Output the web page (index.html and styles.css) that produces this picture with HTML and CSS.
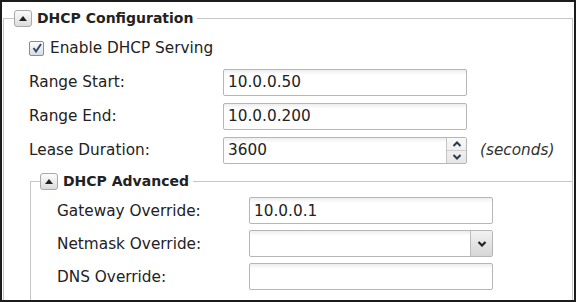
FILE: index.html
```html
<!DOCTYPE html>
<html lang="en">
<head>
  <meta charset="UTF-8" />
  <title>DHCP Configuration</title>
  <link rel="stylesheet" href="styles.css">
</head>
<body>

  <div class="frame">
    <fieldset class="group">
      <legend>
        <span class="legend-inner">
          <span class="toggle"><svg width="8" height="5" viewBox="0 0 8 5"><path d="M0 5 L4 0 L8 5 Z" fill="#222"/></svg></span>
          DHCP Configuration
        </span>
      </legend>

      <div class="rows">
        <label class="row check-row">
          <span class="checkbox">
            <svg width="12" height="12" viewBox="0 0 12 12"><path d="M2.5 6 L5 9.5 L10 2" fill="none" stroke="#3a4a6a" stroke-width="2"/></svg>
          </span>
          Enable DHCP Serving
        </label>
        <div class="row">
          <span class="label">Range Start:</span>
          <input class="text" type="text" value="10.0.0.50">
        </div>
        <div class="row">
          <span class="label">Range End:</span>
          <input class="text" type="text" value="10.0.0.200">
        </div>
        <div class="row">
          <span class="label">Lease Duration:</span>
          <div class="spin">
            <input type="text" value="3600">
            <div class="spin-btns">
              <span class="spin-up"><svg width="10" height="6" viewBox="0 0 10 6"><path d="M1.5 5 L5 1.5 L8.5 5" fill="none" stroke="#2c3850" stroke-width="2"/></svg></span>
              <span class="spin-down"><svg width="10" height="6" viewBox="0 0 10 6"><path d="M1.5 1 L5 4.5 L8.5 1" fill="none" stroke="#2c3850" stroke-width="2"/></svg></span>
            </div>
          </div>
          <span class="unit">(seconds)</span>
        </div>
      </div>

      <fieldset class="group sub">
        <legend>
          <span class="legend-inner">
            <span class="toggle"><svg width="8" height="5" viewBox="0 0 8 5"><path d="M0 5 L4 0 L8 5 Z" fill="#222"/></svg></span>
            DHCP Advanced
          </span>
        </legend>

        <div class="rows">
          <div class="row">
            <span class="label">Gateway Override:</span>
            <input class="text" type="text" value="10.0.0.1">
          </div>
          <div class="row">
            <span class="label">Netmask Override:</span>
            <div class="select">
              <span class="select-value"></span>
              <span class="select-arrow"><svg width="10" height="6" viewBox="0 0 10 6"><path d="M1.5 1 L5 4.5 L8.5 1" fill="none" stroke="#222" stroke-width="2.2"/></svg></span>
            </div>
          </div>
          <div class="row">
            <span class="label">DNS Override:</span>
            <input class="text" type="text" value="">
          </div>
        </div>
      </fieldset>
    </fieldset>
  </div>

</body>
</html>
```

FILE: styles.css
```css
* { box-sizing: border-box; }
body {
  margin: 0;
  font-family: "DejaVu Sans", sans-serif;
  font-size: 15.3px;
  color: #222;
  background: #fff;
}

.frame {
  width: 576px;
  height: 302px;
  border: 2px solid #1c1c1c;
  overflow: hidden;
  background: #fff;
}

/* fieldsets run past the bottom of the frame, so no bottom border shows */
.group {
  margin: 7px 1px 0 1px;
  padding: 0 0 30px 10px;
  border: 1px solid #c6c6c6;
  min-width: 0;
}

.group legend {
  padding: 0 4px 0 0;
  margin: 0;
}

.legend-inner {
  display: flex;
  align-items: center;
  height: 18px;
  font-weight: bold;
  font-size: 14px;
  color: #222;
}

.toggle {
  width: 18px;
  height: 17px;
  border: 1px solid #a9a9a9;
  border-radius: 3px;
  background: linear-gradient(#fbfbfb, #dcdcdc);
  margin-right: 5px;
  display: flex;
  align-items: center;
  justify-content: center;
}

.rows {
  padding: 4px 0 0 15px;
}

.row {
  display: flex;
  align-items: center;
  height: 34px;
}

.label {
  width: 194px;
  flex: none;
}

.check-row .checkbox {
  width: 15px;
  height: 15px;
  border: 1px solid #8c8c8c;
  border-radius: 2px;
  background: linear-gradient(#fdfdfd, #d8dce4);
  margin-right: 6px;
  display: flex;
  align-items: center;
  justify-content: center;
}

input.text, .spin, .select {
  width: 244px;
  height: 27px;
  border: 1px solid #b6b6b6;
  border-radius: 2px;
  background: linear-gradient(#eeeeee, #fff 5px);
}

input {
  font: inherit;
  color: #222;
  padding: 0 4px;
  outline: none;
}

.spin {
  display: flex;
}

.spin input {
  flex: 1;
  min-width: 0;
  border: none;
  background: transparent;
}

.spin-btns {
  width: 20px;
  border-left: 1px solid #c4c4c4;
  display: flex;
  flex-direction: column;
  background: linear-gradient(#f8f8f8, #e6e6e6);
}

.spin-btns span {
  flex: 1;
  display: flex;
  align-items: center;
  justify-content: center;
}

.spin-up {
  border-bottom: 1px solid #d0d0d0;
}

.unit {
  font-style: italic;
  margin-left: 13px;
  color: #333;
}

.sub {
  margin: 5px -1px 0 16px;
  padding-left: 9px;
}

.sub .rows {
  padding: 4px 0 0 17px;
}

.sub .row {
  height: 33px;
}

.sub .label {
  width: 192px;
}

.select {
  display: flex;
}

.select-value {
  flex: 1;
}

.select-arrow {
  width: 22px;
  border-left: 1px solid #bdbdbd;
  background: linear-gradient(#f2f2f2, #d6d6d6);
  display: flex;
  align-items: center;
  justify-content: center;
}
```
